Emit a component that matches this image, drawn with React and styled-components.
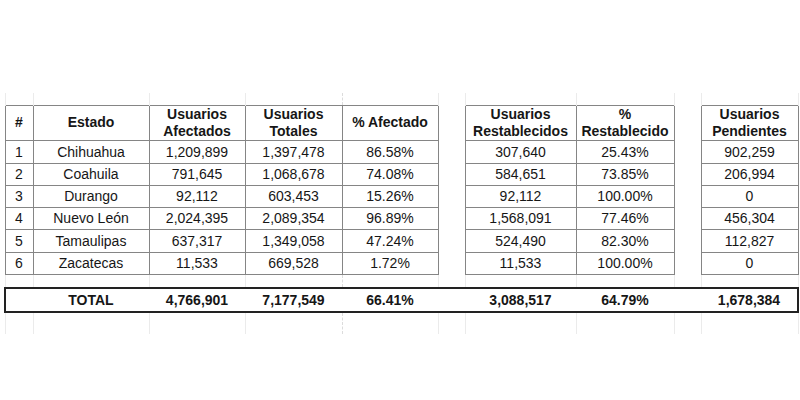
import React from "react";
import styled, { createGlobalStyle } from "styled-components";

const GlobalStyle = createGlobalStyle`
  html, body {
    margin: 0;
    background: #ffffff;
  }
  body {
    font-family: "Liberation Sans", Arial, sans-serif;
    color: #161616;
  }
`;

const widths = [28, 116, 96, 97, 96, 27, 111, 98, 27, 97];
// columns that are spacing between the three boxes
const gapCols = [5, 8];

const rows = [
  ["1", "Chihuahua", "1,209,899", "1,397,478", "86.58%", "307,640", "25.43%", "902,259"],
  ["2", "Coahuila", "791,645", "1,068,678", "74.08%", "584,651", "73.85%", "206,994"],
  ["3", "Durango", "92,112", "603,453", "15.26%", "92,112", "100.00%", "0"],
  ["4", "Nuevo León", "2,024,395", "2,089,354", "96.89%", "1,568,091", "77.46%", "456,304"],
  ["5", "Tamaulipas", "637,317", "1,349,058", "47.24%", "524,490", "82.30%", "112,827"],
  ["6", "Zacatecas", "11,533", "669,528", "1.72%", "11,533", "100.00%", "0"],
];

const headers = [
  "#",
  "Estado",
  ["Usuarios", "Afectados"],
  ["Usuarios", "Totales"],
  "% Afectado",
  ["Usuarios", "Restablecidos"],
  ["%", "Restablecido"],
  ["Usuarios", "Pendientes"],
];

const totals = ["", "TOTAL", "4,766,901", "7,177,549", "66.41%", "3,088,517", "64.79%", "1,678,384"];

// spread the 8 data values over the 10 grid columns
const withGaps = (values) => {
  const out = [];
  let i = 0;
  for (let c = 0; c < widths.length; c++) {
    if (gapCols.includes(c)) out.push(null);
    else out.push(values[i++]);
  }
  return out;
};

const App = () => {
  const ghostRow = (h, key) => (
    <GhostRow key={key} style={{ height: h }}>
      {widths.map((w, c) => (
        <GhostCell key={c} $dashed={c === 3} />
      ))}
    </GhostRow>
  );

  return (
    <Page>
      <GlobalStyle />
      <Sheet>
        <colgroup>
          {widths.map((w, c) => (
            <col key={c} style={{ width: w }} />
          ))}
        </colgroup>
        <tbody>
          {ghostRow(12, "top")}
          <HeadRow>
            {withGaps(headers).map((h, c) =>
              h === null ? (
                <Gap key={c} />
              ) : (
                <HeadCell key={c}>
                  {Array.isArray(h) ? (
                    <>
                      {h[0]}
                      <br />
                      {h[1]}
                    </>
                  ) : (
                    h
                  )}
                </HeadCell>
              )
            )}
          </HeadRow>
          {rows.map((r, i) => (
            <DataRow key={i} $tall={i === 0 || i === 4}>
              {withGaps(r).map((v, c) =>
                v === null ? <Gap key={c} /> : <Cell key={c}>{v}</Cell>
              )}
            </DataRow>
          ))}
          {ghostRow(14, "mid")}
          <TotalRow>
            {withGaps(totals).map((v, c) => (
              <TotalCell
                key={c}
                $first={c === 0}
                $last={c === widths.length - 1}
              >
                {v}
              </TotalCell>
            ))}
          </TotalRow>
          {ghostRow(22, "bottom")}
        </tbody>
      </Sheet>
    </Page>
  );
};

const Page = styled.div`
  width: 800px;
  height: 400px;
  padding: 93px 0 0 4px;
  box-sizing: border-box;
  overflow: hidden;
`;

const Sheet = styled.table`
  border-collapse: collapse;
  table-layout: fixed;
  width: 793px;
  font-size: 14px;
`;

const GhostRow = styled.tr``;

const GhostCell = styled.td`
  padding: 0;
  border-right: 1px ${(p) => (p.$dashed ? "dashed #dcdcdc" : "solid #ebebeb")};
  &:first-child {
    border-left: 1px solid #ebebeb;
  }
`;

const HeadRow = styled.tr`
  height: 35px;
`;

const DataRow = styled.tr`
  height: ${(p) => (p.$tall ? "23px" : "22px")};
`;

const Gap = styled.td`
  padding: 0;
`;

const Cell = styled.td`
  padding: 0;
  text-align: center;
  vertical-align: middle;
  border: 1px solid #858585;
  line-height: 16px;
  white-space: nowrap;
`;

const HeadCell = styled(Cell)`
  font-weight: bold;
  line-height: 17px;
`;

const TotalRow = styled.tr`
  height: 24px;
`;

const TotalCell = styled.td`
  padding: 0;
  text-align: center;
  font-weight: bold;
  white-space: nowrap;
  border-top: 2px solid #222222;
  border-bottom: 2px solid #222222;
  border-left: ${(p) => (p.$first ? "2px solid #222222" : "none")};
  border-right: ${(p) => (p.$last ? "2px solid #222222" : "none")};
`;

export default App;
